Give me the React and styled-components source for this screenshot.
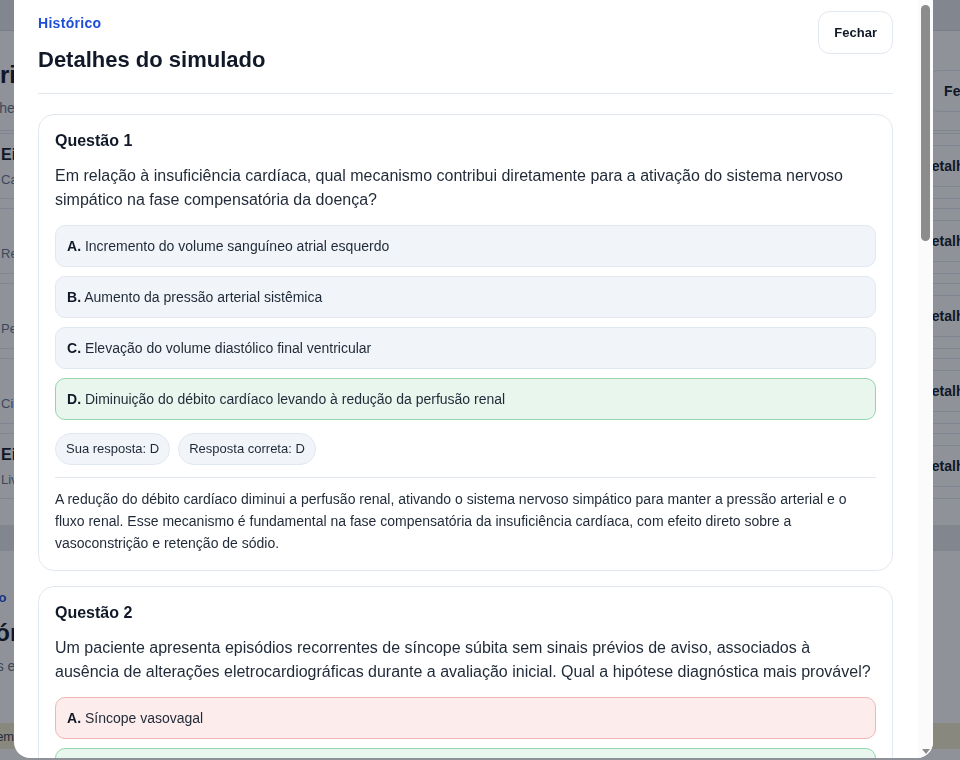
import styled, { createGlobalStyle } from "styled-components";

const GlobalStyle = createGlobalStyle`
  * { box-sizing: border-box; }
  html, body { margin: 0; height: 100%; overflow: hidden; }
  body {
    background: #ffffff;
    font-family: "Liberation Sans", Arial, sans-serif;
    color: #1f2937;
  }
`;

const questions = [
  {
    id: 1,
    text: "Em relação à insuficiência cardíaca, qual mecanismo contribui diretamente para a ativação do sistema nervoso simpático na fase compensatória da doença?",
    options: [
      "Incremento do volume sanguíneo atrial esquerdo",
      "Aumento da pressão arterial sistêmica",
      "Elevação do volume diastólico final ventricular",
      "Diminuição do débito cardíaco levando à redução da perfusão renal",
    ],
    answer: "D",
    correct: "D",
    explanation:
      "A redução do débito cardíaco diminui a perfusão renal, ativando o sistema nervoso simpático para manter a pressão arterial e o fluxo renal. Esse mecanismo é fundamental na fase compensatória da insuficiência cardíaca, com efeito direto sobre a vasoconstrição e retenção de sódio.",
  },
  {
    id: 2,
    text: "Um paciente apresenta episódios recorrentes de síncope súbita sem sinais prévios de aviso, associados à ausência de alterações eletrocardiográficas durante a avaliação inicial. Qual a hipótese diagnóstica mais provável?",
    options: [
      "Síncope vasovagal",
      "Arritmia cardíaca paroxística",
      "Hipotensão ortostática",
      "Estenose aórtica grave",
    ],
    answer: "A",
    correct: "B",
    explanation:
      "A síncope súbita, sem pródromos, com ECG inicial normal, sugere arritmia paroxística. A monitorização prolongada do ritmo (Holter ou monitor de eventos) é indicada para confirmar o diagnóstico.",
  },
  {
    id: 3,
    text: "Qual classe de medicamentos demonstrou redução de mortalidade em pacientes com insuficiência cardíaca com fração de ejeção reduzida?",
    options: [
      "Bloqueadores dos canais de cálcio não diidropiridínicos",
      "Inibidores da enzima conversora de angiotensina",
      "Diuréticos de alça em dose elevada",
      "Digitálicos em uso contínuo",
    ],
    answer: "B",
    correct: "B",
    explanation:
      "Os inibidores da ECA reduzem a mortalidade e as internações na insuficiência cardíaca com fração de ejeção reduzida, atuando sobre o remodelamento ventricular.",
  },
  {
    id: 4,
    text: "Na avaliação de dor torácica aguda, qual achado eletrocardiográfico indica necessidade de reperfusão imediata?",
    options: [
      "Inversão de onda T isolada em V1",
      "Bloqueio de ramo direito antigo",
      "Supradesnivelamento do segmento ST em derivações contíguas",
      "Extrassístoles ventriculares isoladas",
    ],
    answer: "D",
    correct: "C",
    explanation:
      "O supradesnivelamento do segmento ST em duas ou mais derivações contíguas caracteriza o infarto com supra de ST, que exige reperfusão o mais rápido possível.",
  },
  {
    id: 5,
    text: "Qual é o principal fator de risco modificável para o desenvolvimento de fibrilação atrial?",
    options: [
      "Hipertensão arterial sistêmica",
      "Idade avançada",
      "Sexo masculino",
      "História familiar",
    ],
    answer: "A",
    correct: "A",
    explanation:
      "A hipertensão arterial é o fator de risco modificável mais prevalente para fibrilação atrial, por promover remodelamento e dilatação atrial.",
  },
];

const letters = ["A", "B", "C", "D"];

const historyRows = [
  { title: "Einstein · Cardiologia", meta: "Cardiologia" },
  { title: "", meta: "Realizado em 12/03 · 5 acertos" },
  { title: "", meta: "Pediatria · 18 questões" },
  { title: "", meta: "Cirurgia geral e vascular" },
  { title: "Einstein · Clínica", meta: "Livre" },
];

function optionState(q, letter) {
  if (letter === q.correct) return "correct";
  if (letter === q.answer) return "wrong";
  return "idle";
}

export default function App() {
  return (
    <>
      <GlobalStyle />

      {/* page underneath the dialog */}
      <Backdrop>
        <BackBar />
        <BackPanel>
          <BackHead>
            <div>
              <BackTitle>Histórico de simulados</BackTitle>
              <BackSub>Acompanhe todos os simulados</BackSub>
            </div>
            <BackButton>Fechar</BackButton>
          </BackHead>
          <BackList>
            {historyRows.map((r, i) => (
              <BackRow key={i}>
                <div>
                  {r.title && <BackRowTitle>{r.title}</BackRowTitle>}
                  <BackRowMeta $solo={!r.title}>{r.meta}</BackRowMeta>
                </div>
                <BackButton>Detalhes</BackButton>
              </BackRow>
            ))}
          </BackList>
        </BackPanel>
        <BackFooter />
        <BackSection>
          <BackLabel>Histórico</BackLabel>
          <BackTitle>Histórico da turma</BackTitle>
          <BackSub>Sessões e correções</BackSub>
        </BackSection>
        <BackNotice>Você tem um simulado em andamento</BackNotice>
      </Backdrop>

      <Overlay>
        <Modal>
          <ModalBody>
            <Header>
              <div>
                <Eyebrow>Histórico</Eyebrow>
                <Title>Detalhes do simulado</Title>
              </div>
              <CloseButton>Fechar</CloseButton>
            </Header>

            <QuestionList>
              {questions.map((q) => (
                <Card key={q.id}>
                  <CardTitle>Questão {q.id}</CardTitle>
                  <Statement>{q.text}</Statement>
                  <Options>
                    {q.options.map((opt, i) => (
                      <Option key={opt} $state={optionState(q, letters[i])}>
                        <b>{letters[i]}.</b> {opt}
                      </Option>
                    ))}
                  </Options>
                  <Chips>
                    <Chip>Sua resposta: {q.answer}</Chip>
                    <Chip>Resposta correta: {q.correct}</Chip>
                  </Chips>
                  <Explanation>{q.explanation}</Explanation>
                </Card>
              ))}
            </QuestionList>
          </ModalBody>

          <ScrollTrack>
            <Thumb />
            <ArrowDown />
          </ScrollTrack>
        </Modal>
      </Overlay>
    </>
  );
}

/* ---------- page underneath ---------- */

const Backdrop = styled.div`
  height: 100vh;
  overflow: hidden;
`;

const BackBar = styled.div`
  height: 31px;
  background: #e6e8ed;
  border-bottom: 1px solid #d6dae1;
`;

const BackPanel = styled.div`
  margin-left: -60px;
  width: 1090px;
`;

const BackHead = styled.div`
  display: flex;
  justify-content: space-between;
  align-items: flex-start;
  padding: 29px 23px 14px 0;
  border-bottom: 1px solid #dfe3e8;
`;

const BackTitle = styled.h2`
  margin: 0;
  font-size: 24px;
  line-height: 30px;
  font-weight: 700;
  color: #0f172a;
`;

const BackSub = styled.p`
  margin: 10px 0 0;
  font-size: 14px;
  line-height: 16px;
  color: #64748b;
`;

const BackButton = styled.button`
  height: 42px;
  padding: 0 16px;
  margin-top: 10px;
  background: #fff;
  border: 1px solid #e2e8f0;
  border-radius: 12px;
  font: 700 14px "Liberation Sans", Arial, sans-serif;
  color: #0f172a;
`;

const BackList = styled.div`
  display: flex;
  flex-direction: column;
  gap: 9px;
  padding: 2px 16px 12px 0;
`;

const BackRow = styled.div`
  display: flex;
  justify-content: space-between;
  align-items: center;
  height: 66px;
  padding: 0 16px 0 60px;
  border: 1px solid #e2e8f0;
  border-radius: 10px;
  background: #fff;

  ${BackButton} {
    margin-top: 0;
  }
`;

const BackRowTitle = styled.div`
  font-size: 16px;
  font-weight: 700;
  color: #0f172a;
`;

const BackRowMeta = styled.div`
  margin-top: ${(p) => (p.$solo ? "24px" : "8px")};
  font-size: 13px;
  color: #64748b;
`;

const BackFooter = styled.div`
  height: 26px;
  margin-top: 14px;
  background: #e6e8ed;
`;

const BackSection = styled.div`
  padding-top: 39px;
  margin-left: -50px;
`;

const BackLabel = styled.div`
  font-size: 13px;
  line-height: 16px;
  font-weight: 700;
  color: #1d4ed8;
  margin-bottom: 12px;
`;

const BackNotice = styled.div`
  margin-top: 49px;
  height: 26px;
  padding-top: 6px;
  background: #f3edce;
  font-size: 13px;
  color: #374151;
  text-indent: -40px;
`;

/* ---------- dialog ---------- */

const Overlay = styled.div`
  position: fixed;
  inset: 0;
  background: rgba(17, 24, 39, 0.47);
  display: flex;
  align-items: flex-start;
  padding-left: 14px;
`;

const Modal = styled.div`
  display: flex;
  width: 919px;
  height: 758px;
  background: #ffffff;
  border-radius: 0 0 16px 16px;
  overflow: hidden;
`;

const ModalBody = styled.div`
  flex: 1;
  overflow-y: auto;
  scrollbar-width: none;
  padding: 11px 25px 24px 24px;

  &::-webkit-scrollbar {
    display: none;
  }
`;

const ScrollTrack = styled.div`
  width: 15px;
  flex-shrink: 0;
  display: flex;
  flex-direction: column;
  align-items: center;
  justify-content: space-between;
  padding: 5px 0 4px;
  background: #fbfbfb;
`;

const Thumb = styled.div`
  width: 9px;
  height: 236px;
  border-radius: 5px;
  background: #8c8c8c;
`;

const ArrowDown = styled.div`
  width: 0;
  height: 0;
  border-left: 4px solid transparent;
  border-right: 4px solid transparent;
  border-top: 5px solid #8c8c8c;
`;

const Header = styled.div`
  display: flex;
  justify-content: space-between;
  align-items: flex-start;
  padding-bottom: 19px;
  border-bottom: 1px solid #e2e8f0;
`;

const Eyebrow = styled.div`
  margin-top: 3px;
  font-size: 14px;
  line-height: 18px;
  font-weight: 700;
  letter-spacing: 0.3px;
  color: #1d4ed8;
`;

const Title = styled.h1`
  margin: 14px 0 0;
  font-size: 22px;
  line-height: 28px;
  font-weight: 700;
  color: #111827;
`;

const CloseButton = styled.button`
  height: 43px;
  padding: 0 15px;
  background: #ffffff;
  border: 1px solid #e2e8f0;
  border-radius: 12px;
  font: 700 13px "Liberation Sans", Arial, sans-serif;
  color: #111827;
  cursor: pointer;
`;

const QuestionList = styled.div`
  display: flex;
  flex-direction: column;
  gap: 15px;
  margin-top: 20px;
`;

const Card = styled.section`
  border: 1px solid #e2e8f0;
  border-radius: 16px;
  padding: 16px;
  background: #ffffff;
`;

const CardTitle = styled.h3`
  margin: 0;
  font-size: 16px;
  line-height: 20px;
  font-weight: 700;
  color: #111827;
`;

const Statement = styled.p`
  margin: 13px 0 0;
  font-size: 16px;
  line-height: 24px;
  color: #1f2937;
`;

const Options = styled.div`
  display: flex;
  flex-direction: column;
  gap: 9px;
  margin-top: 13px;
`;

const optionColors = {
  idle: { bg: "#f1f5f9", border: "#e2e8f0" },
  correct: { bg: "#e8f6ee", border: "#95d5ae" },
  wrong: { bg: "#fdecec", border: "#f1b5b5" },
};

const Option = styled.div`
  padding: 10px 11px;
  font-size: 14px;
  line-height: 20px;
  color: #1f2937;
  background: ${(p) => optionColors[p.$state].bg};
  border: 1px solid ${(p) => optionColors[p.$state].border};
  border-radius: 10px;

  b {
    color: #111827;
  }
`;

const Chips = styled.div`
  display: flex;
  gap: 8px;
  margin-top: 13px;
  padding-bottom: 12px;
  border-bottom: 1px solid #e2e8f0;
`;

const Chip = styled.span`
  padding: 6px 10px;
  font-size: 13px;
  line-height: 18px;
  color: #1f2937;
  background: #f1f5f9;
  border: 1px solid #e2e8f0;
  border-radius: 999px;
`;

const Explanation = styled.p`
  margin: 10px 0 0;
  font-size: 14px;
  line-height: 22px;
  color: #1f2937;
`;
